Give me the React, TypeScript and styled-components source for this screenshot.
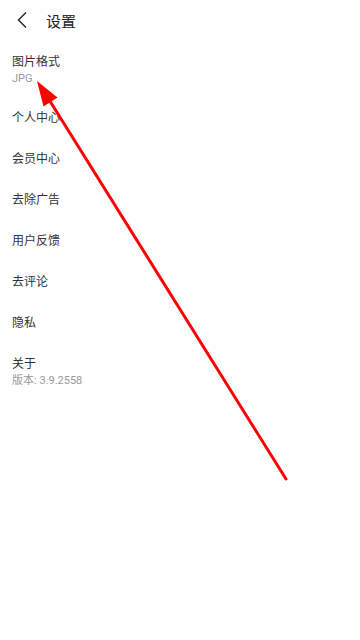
import React from 'react';
import styled, { createGlobalStyle } from 'styled-components';

const Global = createGlobalStyle`
  html, body { margin: 0; padding: 0; background: #fff; }
  body { font-family: Roboto, "Noto Sans CJK SC", sans-serif; }
`;

const Page = styled.div`
  position: relative;
  width: 360px;
  height: 640px;
  background: #fff;
  overflow: hidden;
`;

const Header = styled.div`
  display: flex;
  align-items: center;
  height: 40px;
  padding-left: 15px;
`;

const Back = styled.button`
  display: flex;
  align-items: center;
  justify-content: center;
  width: 14px;
  height: 20px;
  padding: 0;
  margin-right: 17px;
  border: none;
  background: none;
`;

const Title = styled.h1`
  margin: 0;
  font-size: 15px;
  font-weight: 400;
  color: #222;
`;

const List = styled.ul`
  list-style: none;
  margin: 0;
  padding: 2px 0 0;
`;

const Row = styled.li`
  display: flex;
  flex-direction: column;
  padding: 12px 12px;
`;

const Label = styled.span`
  font-size: 12px;
  line-height: 17px;
  color: #333;
`;

const Sub = styled.span`
  font-size: 11px;
  line-height: 15px;
  color: #999;
`;

const Overlay = styled.svg`
  position: absolute;
  left: 0;
  top: 0;
  pointer-events: none;
`;

const items: { label: string; sub?: string }[] = [
  { label: '图片格式', sub: 'JPG' },
  { label: '个人中心' },
  { label: '会员中心' },
  { label: '去除广告' },
  { label: '用户反馈' },
  { label: '去评论' },
  { label: '隐私' },
  { label: '关于', sub: '版本: 3.9.2558' },
];

export default function App() {
  return (
    <Page>
      <Global />
      <Header>
        <Back aria-label="back">
          <svg width="12" height="18" viewBox="0 0 12 18">
            <polyline points="10,1.5 2.5,9 10,16.5" fill="none" stroke="#222" strokeWidth="1.4" />
          </svg>
        </Back>
        <Title>设置</Title>
      </Header>
      <List>
        {items.map(it => (
          <Row key={it.label}>
            <Label>{it.label}</Label>
            {it.sub && <Sub>{it.sub}</Sub>}
          </Row>
        ))}
      </List>
      <Overlay width="360" height="640" viewBox="0 0 360 640">
        <line x1="286" y1="479" x2="48" y2="98" stroke="#ff0000" strokeWidth="3" strokeLinecap="round" />
        <polygon points="37,81 57.5,97.5 43.5,106.5" fill="#ff0000" />
      </Overlay>
    </Page>
  );
}
